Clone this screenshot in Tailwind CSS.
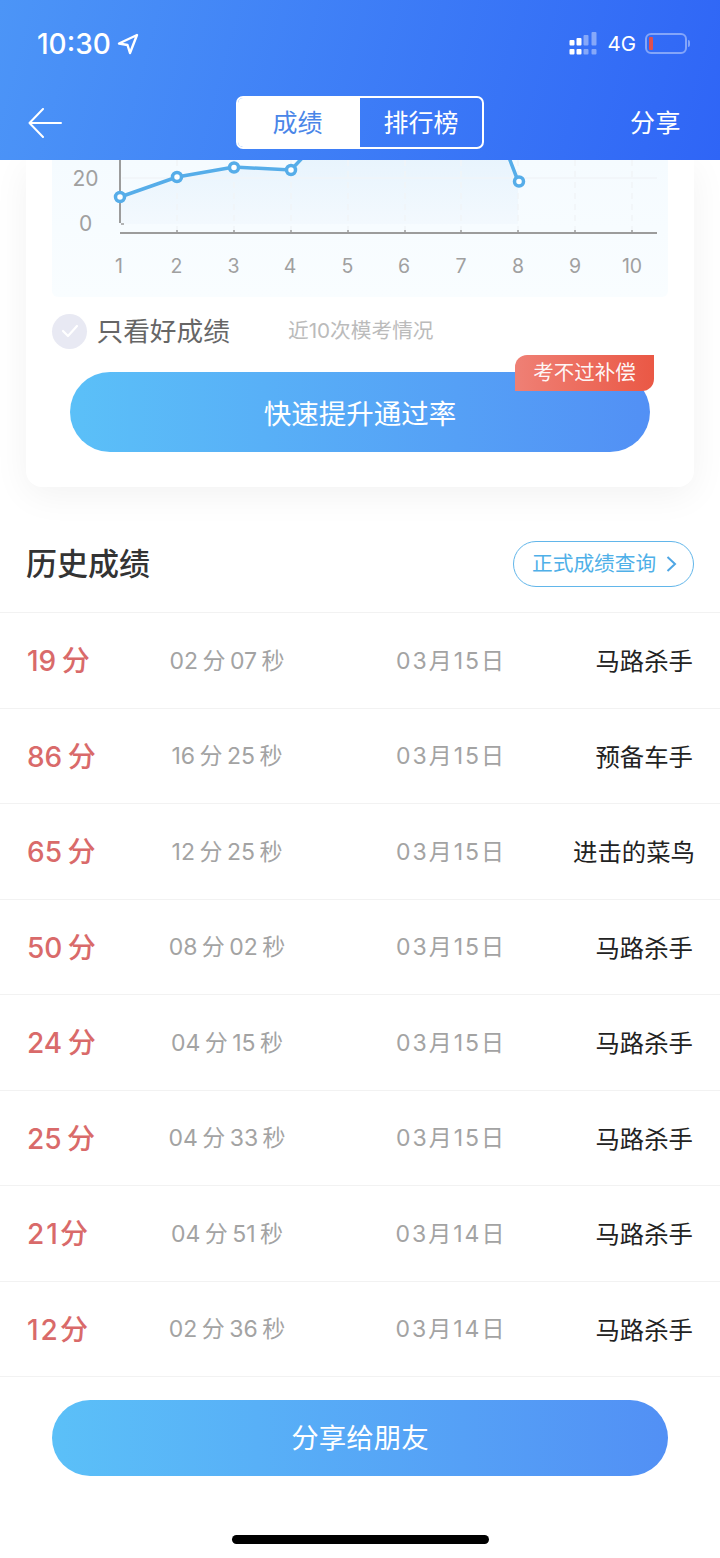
<!doctype html>
<html lang="zh-CN">
<head>
<meta charset="utf-8">
<script src="https://cdn.jsdelivr.net/npm/@tailwindcss/browser@4"></script>
</head>
<body class="bg-white font-[Inter,'Noto_Sans_CJK_SC',sans-serif]">
<div class="w-[720px] h-[1558px] overflow-hidden relative bg-white">
  <!-- Header -->
  <header class="relative z-10 h-[160px] bg-[linear-gradient(105deg,#4c95f7,#2f65f6)] text-white">
    <div class="h-[96px] flex items-center pl-[37px] pr-[30px] pb-[10px]">
      <span class="text-[28px] font-medium leading-none mt-[2px]">10:30</span>
      <svg class="ml-[6px] mt-[2px]" width="22" height="22" viewBox="0 0 22 22" fill="none" stroke="#fff" stroke-width="2.4" stroke-linejoin="round"><path d="M20 2 2 10.5l8.5 1.5L13 20z"/></svg>
      <div class="ml-auto flex items-center">
        <svg width="30" height="24" viewBox="567 31 30 24" fill="#fff">
          <rect x="569.5" y="40" width="5" height="5.5" rx="1"/><rect x="569.5" y="49" width="5" height="5.5" rx="1"/>
          <rect x="576.5" y="38" width="5" height="7.5" rx="1"/><rect x="576.5" y="49" width="5" height="5.5" rx="1"/>
          <g opacity=".4"><rect x="583.5" y="35" width="5" height="10.5" rx="1"/><rect x="583.5" y="49" width="5" height="5.5" rx="1"/>
          <rect x="591.5" y="32" width="5" height="13.5" rx="1"/><rect x="591.5" y="49" width="5" height="5.5" rx="1"/></g>
        </svg>
        <span class="ml-[10px] text-[20.500px] leading-none mt-[2px]">4G</span>
        <div class="ml-[9px] w-[42px] h-[21px] rounded-[6px] border-2 border-white/40 p-[2px]"><div class="w-[4px] h-full bg-[#e0504f] rounded-[1px]"></div></div>
        <div class="ml-[1px] w-[2px] h-[7px] bg-white/40 rounded-r-[2px]"></div>
      </div>
    </div>
    <div class="relative h-[53px] flex items-center justify-between pl-[28px] pr-[39px]">
      <svg width="34" height="30" viewBox="0 0 34 30" fill="none" stroke="#fff" stroke-width="2" stroke-linecap="round" stroke-linejoin="round"><path d="M15 1 1.500 15 15 29M1.500 15H33"/></svg>
      <div class="absolute left-[236px] top-0 w-[248px] h-[53px] rounded-[7px] border-2 border-white flex overflow-hidden text-[25px]">
        <div class="w-[122px] bg-white text-[#4a86e8] flex items-center justify-center pt-[2px] pr-[3px]">成绩</div>
        <div class="flex-1 flex items-center justify-center pt-[2px]">排行榜</div>
      </div>
      <span class="text-[25px] tracking-[0.5px] pt-[3px]">分享</span>
    </div>
  </header>

  <!-- Card -->
  <section class="mx-[26px] h-[327px] bg-white rounded-b-[16px] shadow-[0_8px_36px_rgba(0,0,0,0.055)] relative">
    <div class="ml-[26px] w-[616px] h-[137px] overflow-hidden bg-[linear-gradient(180deg,#f5fbff,#f9fdff)] rounded-b-[6px]">
      <svg width="616" height="137" viewBox="52 160 616 137" class="block">
        <defs>
          <linearGradient id="area" x1="0" y1="0" x2="0" y2="1"><stop offset="0" stop-color="#e8f4fd"/><stop offset="1" stop-color="#f3f9fe"/></linearGradient>
        </defs>
        <path d="M120 197 177 177 234 167 291 170 305 157H510L518 181V224H120Z" fill="url(#area)"/>
        <g stroke="#f0f4f7" stroke-width="1.5" stroke-dasharray="6 5" fill="none">
          <path d="M177 160V232M234 160V232M291 160V232M348 160V232M405 160V232M461 160V232M518 160V232M575 160V232M632 160V232"/>
        </g>
        <path d="M122 178H657" stroke="#f1f5f8" stroke-width="1.5"/>
        <path d="M120 160V223" stroke="#9c9c9c" stroke-width="2"/>
        <path d="M121 224H124" stroke="#9c9c9c" stroke-width="1.5"/>
        <path d="M120 233H657" stroke="#9c9c9c" stroke-width="2"/>
        <path d="M177 230V233M234 230V233M291 230V233M348 230V233M405 230V233M461 230V233M518 230V233M575 230V233M632 230V233" stroke="#9c9c9c" stroke-width="1.5"/>
        <path d="M120 197 177 177 234 167 291 170 305 155M508 155 518 181" fill="none" stroke="#56ade9" stroke-width="3.500"/>
        <g fill="#fff" stroke="#56ade9" stroke-width="3.500">
          <circle cx="120" cy="197" r="4.500"/><circle cx="177" cy="177" r="4.500"/><circle cx="234" cy="167.500" r="4.500"/><circle cx="291" cy="170" r="4.500"/><circle cx="519" cy="181.500" r="4.500"/>
        </g>
        <g fill="#a0a0a0" font-size="19.500" text-anchor="middle">
          <text x="85.500" y="185.500" font-size="21">20</text>
          <text x="85.500" y="230.500" font-size="21">0</text>
          <text x="119" y="273">1</text><text x="176.500" y="273">2</text><text x="233.500" y="273">3</text><text x="290" y="273">4</text><text x="347.500" y="273">5</text><text x="404" y="273">6</text><text x="461" y="273">7</text><text x="518" y="273">8</text><text x="575" y="273">9</text><text x="632" y="273">10</text>
        </g>
      </svg>
    </div>
    <div class="h-[68px] ml-[26px] flex items-center">
      <div class="w-[35px] h-[35px] rounded-full bg-[#e8e9f3] flex items-center justify-center">
        <svg width="18" height="14" viewBox="0 0 18 14" fill="none" stroke="#fff" stroke-width="2.200" stroke-linecap="round" stroke-linejoin="round"><path d="M2 7l5 5L16 2"/></svg>
      </div>
      <span class="ml-[9.500px] text-[26.700px] leading-none text-[#666]">只看好成绩</span>
      <span class="ml-[58px] text-[20.700px] leading-none text-[#bbb]">近10次模考情况</span>
    </div>
    <div class="relative ml-[44px] w-[580px] h-[80px] mt-[7px] rounded-[40px] bg-[linear-gradient(90deg,#5bc0f8,#5290f5)] flex items-center justify-center pt-[5px] text-white text-[27.500px]">
      快速提升通过率
      <div class="absolute left-[445px] top-[-17px] w-[139px] h-[36px] rounded-tl-[12px] rounded-br-[12px] bg-[linear-gradient(90deg,#ef8075,#ea5845)] flex items-center justify-center text-[20.500px] text-white/95">考不过补偿</div>
    </div>
  </section>

  <!-- History heading -->
  <div class="h-[126px] border-b border-[#f2f2f2] px-[26px] flex items-center justify-between pt-[28px]">
    <h2 class="text-[31px] font-medium text-[#333] leading-none">历史成绩</h2>
    <div class="w-[181px] h-[46px] rounded-[23px] border border-[#62b6ea] flex items-center pl-[18px] text-[20.700px] text-[#4fb0e8]">
      正式成绩查询
      <svg class="ml-[10px]" width="11" height="18" viewBox="0 0 11 18" fill="none" stroke="#4fa6e4" stroke-width="2"><path d="M1.500 2 9 9l-7.500 7"/></svg>
    </div>
  </div>

  <!-- Rows -->
  <ul>
    <li class="h-[95.500px] border-b border-[#f2f2f2] pt-[2px] px-[27px] grid grid-cols-[100px_200px_246px_1fr] items-center">
      <span class="text-[28px] font-medium text-[#d96a6a] leading-none [word-spacing:-2px]">19 分</span>
      <span class="text-center text-[23px] text-[#a3a3a3] leading-none [word-spacing:-2px]">02 分 07 秒</span>
      <span class="text-center text-[23px] text-[#a3a3a3] leading-none tracking-[2px] pl-[2px]">03月15日</span>
      <span class="justify-self-end text-[24.400px] text-[#222] leading-none whitespace-nowrap">马路杀手</span>
    </li>
    <li class="h-[95.500px] border-b border-[#f2f2f2] pt-[2px] px-[27px] grid grid-cols-[100px_200px_246px_1fr] items-center">
      <span class="text-[28px] font-medium text-[#d96a6a] leading-none [word-spacing:-2px]">86 分</span>
      <span class="text-center text-[23px] text-[#a3a3a3] leading-none [word-spacing:-2px]">16 分 25 秒</span>
      <span class="text-center text-[23px] text-[#a3a3a3] leading-none tracking-[2px] pl-[2px]">03月15日</span>
      <span class="justify-self-end text-[24.400px] text-[#222] leading-none whitespace-nowrap">预备车手</span>
    </li>
    <li class="h-[95.500px] border-b border-[#f2f2f2] pt-[2px] px-[27px] grid grid-cols-[100px_200px_246px_1fr] items-center">
      <span class="text-[28px] font-medium text-[#d96a6a] leading-none [word-spacing:-2px]">65 分</span>
      <span class="text-center text-[23px] text-[#a3a3a3] leading-none [word-spacing:-2px]">12 分 25 秒</span>
      <span class="text-center text-[23px] text-[#a3a3a3] leading-none tracking-[2px] pl-[2px]">03月15日</span>
      <span class="justify-self-end text-[24.400px] text-[#222] leading-none whitespace-nowrap">进击的菜鸟</span>
    </li>
    <li class="h-[95.500px] border-b border-[#f2f2f2] pt-[2px] px-[27px] grid grid-cols-[100px_200px_246px_1fr] items-center">
      <span class="text-[28px] font-medium text-[#d96a6a] leading-none [word-spacing:-2px]">50 分</span>
      <span class="text-center text-[23px] text-[#a3a3a3] leading-none [word-spacing:-2px]">08 分 02 秒</span>
      <span class="text-center text-[23px] text-[#a3a3a3] leading-none tracking-[2px] pl-[2px]">03月15日</span>
      <span class="justify-self-end text-[24.400px] text-[#222] leading-none whitespace-nowrap">马路杀手</span>
    </li>
    <li class="h-[95.500px] border-b border-[#f2f2f2] pt-[2px] px-[27px] grid grid-cols-[100px_200px_246px_1fr] items-center">
      <span class="text-[28px] font-medium text-[#d96a6a] leading-none [word-spacing:-2px]">24 分</span>
      <span class="text-center text-[23px] text-[#a3a3a3] leading-none [word-spacing:-2px]">04 分 15 秒</span>
      <span class="text-center text-[23px] text-[#a3a3a3] leading-none tracking-[2px] pl-[2px]">03月15日</span>
      <span class="justify-self-end text-[24.400px] text-[#222] leading-none whitespace-nowrap">马路杀手</span>
    </li>
    <li class="h-[95.500px] border-b border-[#f2f2f2] pt-[2px] px-[27px] grid grid-cols-[100px_200px_246px_1fr] items-center">
      <span class="text-[28px] font-medium text-[#d96a6a] leading-none [word-spacing:-2px]">25 分</span>
      <span class="text-center text-[23px] text-[#a3a3a3] leading-none [word-spacing:-2px]">04 分 33 秒</span>
      <span class="text-center text-[23px] text-[#a3a3a3] leading-none tracking-[2px] pl-[2px]">03月15日</span>
      <span class="justify-self-end text-[24.400px] text-[#222] leading-none whitespace-nowrap">马路杀手</span>
    </li>
    <li class="h-[95.500px] border-b border-[#f2f2f2] pt-[2px] px-[27px] grid grid-cols-[100px_200px_246px_1fr] items-center">
      <span class="text-[28px] font-medium text-[#d96a6a] leading-none tracking-[2px]">21分</span>
      <span class="text-center text-[23px] text-[#a3a3a3] leading-none [word-spacing:-2px]">04 分 51 秒</span>
      <span class="text-center text-[23px] text-[#a3a3a3] leading-none tracking-[2px] pl-[2px]">03月14日</span>
      <span class="justify-self-end text-[24.400px] text-[#222] leading-none whitespace-nowrap">马路杀手</span>
    </li>
    <li class="h-[95.500px] border-b border-[#f2f2f2] pt-[2px] px-[27px] grid grid-cols-[100px_200px_246px_1fr] items-center">
      <span class="text-[28px] font-medium text-[#d96a6a] leading-none tracking-[2px]">12分</span>
      <span class="text-center text-[23px] text-[#a3a3a3] leading-none [word-spacing:-2px]">02 分 36 秒</span>
      <span class="text-center text-[23px] text-[#a3a3a3] leading-none tracking-[2px] pl-[2px]">03月14日</span>
      <span class="justify-self-end text-[24.400px] text-[#222] leading-none whitespace-nowrap">马路杀手</span>
    </li>
  </ul>

  <div class="mx-[52px] mt-[23px] h-[76px] rounded-[38px] bg-[linear-gradient(90deg,#5bc0f8,#5290f5)] flex items-center justify-center pt-[2px] text-white text-[27.500px]">分享给朋友</div>
  <div class="mx-auto mt-[59px] w-[257px] h-[9px] rounded-full bg-black"></div>
</div>
</body>
</html>
